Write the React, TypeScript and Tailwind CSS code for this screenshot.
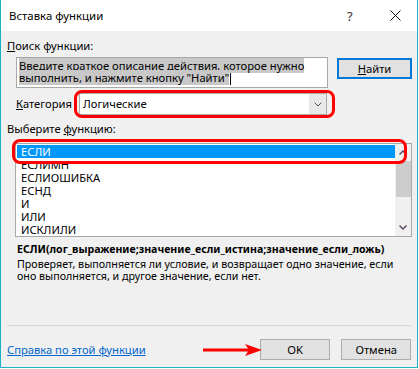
import React from "react";

const items = ["ЕСЛИ", "ЕСЛИМН", "ЕСЛИОШИБКА", "ЕСНД", "И", "ИЛИ", "ИСКЛИЛИ"];

export default function App() {
  return (
    <div className="w-[419px] h-[369px] bg-white font-['Noto_Sans','Open_Sans',sans-serif] text-[11.2px] text-black whitespace-nowrap overflow-hidden">
      <div className="w-[418px] h-[368px] border-x border-b border-[#19b2c8] flex flex-col bg-[#f0f0f0]">
        {/* title bar */}
        <div className="h-[31px] bg-white flex items-center shrink-0">
          <span className="ml-[8px] leading-[16px] text-[11.4px]">Вставка функции</span>
          <span className="ml-auto leading-[16px] text-[13px] text-[#3a2a2a] w-[10px]">?</span>
          <span className="ml-[33px] mr-[16px] flex items-center">
            <svg width="11" height="11" viewBox="0 0 11 11">
              <path d="M0.5 0.5 L10.5 10.5 M10.5 0.5 L0.5 10.5" stroke="#111" strokeWidth="1" />
            </svg>
          </span>
        </div>

        {/* body */}
        <div className="relative flex-1 flex flex-col pl-[6px]">
          <div className="mt-[7px] leading-[16px] h-[16px] shrink-0">
            <span className="underline">П</span>оиск функции:
          </div>

          <div className="mt-[3px] flex items-start shrink-0">
            <div className="ml-[9px] w-[312px] h-[31px] border border-[#a8a8a8] bg-white pl-[2px] pt-[2px] leading-[12px]">
              <div className="inline bg-[#c8c8c8] leading-[12px]">Введите краткое описание действия, которое нужно</div>
              <br />
              <div className="inline bg-[#c8c8c8] leading-[12px]">выполнить, и нажмите кнопку "Найти"</div>
              <span className="inline-block w-px h-[12px] bg-black align-middle ml-px" />
            </div>
            <button className="ml-[9px] mt-[1px] w-[75px] h-[21px] border-2 border-[#0078d7] bg-[#e1e1e1] leading-[16px] flex items-center justify-center">
              <span>
                <span className="underline">Н</span>айти
              </span>
            </button>
          </div>

          <div className="mt-[5px] flex items-center h-[22px] shrink-0">
            <div className="ml-[9px] w-[63px] leading-[16px]">
              <span className="underline">К</span>атегория
            </div>
            <div className="relative w-[248px] h-[22px] border border-[#a8a8a8] bg-white flex items-center">
              <span className="ml-[3px] leading-[16px]">Логические</span>
              <div className="ml-auto w-[17px] h-[20px] bg-[#e8e8e8] flex items-center justify-center">
                <svg width="8" height="5" viewBox="0 0 8 5">
                  <path d="M0.5 0.5 L4 4 L7.5 0.5" stroke="#555" strokeWidth="1" fill="none" />
                </svg>
              </div>
              <div className="absolute left-[-6px] top-[-4px] w-[261px] h-[28px] border-[3px] border-[#ff0000] rounded-[8px]" />
            </div>
          </div>

          <div className="mt-[6px] leading-[16px] h-[16px] shrink-0">
            Выберите <span className="underline">ф</span>ункцию:
          </div>

          <div className="relative mt-[6px] ml-[8px] w-[397px] h-[94px] shrink-0 border border-[#a8a8a8] bg-white flex p-px">
            <div className="flex-1 flex flex-col">
              {items.map((t, i) => (
                <div
                  key={t}
                  className={
                    i === 0
                      ? "h-[13px] leading-[13px] pl-[4px] bg-[#0097fb] text-white"
                      : "h-[13px] leading-[13px] pl-[4px]"
                  }
                >
                  {t}
                </div>
              ))}
            </div>
            <div className="w-[16px] -my-px -mr-px bg-[#f0f0f0] flex flex-col items-center">
              <div className="h-[17px] flex items-center justify-center">
                <svg width="8" height="5" viewBox="0 0 8 5">
                  <path d="M0.5 4.5 L4 1 L7.5 4.5" stroke="#5b4d66" strokeWidth="1.5" fill="none" />
                </svg>
              </div>
              <div className="w-[15px] h-[36px] bg-[#cdcdcd]" />
              <div className="mt-auto h-[17px] flex items-center justify-center">
                <svg width="8" height="5" viewBox="0 0 8 5">
                  <path d="M0.5 0.5 L4 4 L7.5 0.5" stroke="#5b4d66" strokeWidth="1.5" fill="none" />
                </svg>
              </div>
            </div>
            <div className="absolute left-[-4px] top-[-5px] w-[395px] h-[25px] border-[3px] border-[#ff0000] rounded-[8px]" />
          </div>

          <div className="mt-[4px] ml-[10px] leading-[16px] h-[16px] font-bold text-[10.6px] shrink-0">
            ЕСЛИ(лог_выражение;значение_если_истина;значение_если_ложь)
          </div>
          <div className="ml-[10px] leading-[12px] mt-[1px] text-[10.7px] shrink-0">
            <div>Проверяет, выполняется ли условие, и возвращает одно значение, если</div>
            <div>оно выполняется, и другое значение, если нет.</div>
          </div>

          <div className="mt-[43px] w-[404px] h-px bg-[#d8d8d8] shrink-0" />

          <div className="mt-[13px] flex items-center h-[21px] shrink-0">
            <span className="text-[#0066cc] underline leading-[16px]">Справка по этой функции</span>
            <div className="relative ml-[57px] w-[60px] h-[14px]">
              <svg width="60" height="14" viewBox="0 0 60 14" className="absolute left-0 top-0">
                <line x1="0" y1="7" x2="46" y2="7" stroke="#ff0000" strokeWidth="3" />
                <path d="M42 1 L59 7 L42 13 L46 7 Z" fill="#ff0000" />
              </svg>
            </div>
            <button className="ml-auto w-[74px] h-[21px] border border-[#adadad] bg-[#e1e1e1] leading-[16px]">OK</button>
            <button className="ml-[11px] mr-[6px] w-[73px] h-[21px] border border-[#adadad] bg-[#e1e1e1] leading-[16px]">Отмена</button>
          </div>
        </div>
      </div>
    </div>
  );
}
